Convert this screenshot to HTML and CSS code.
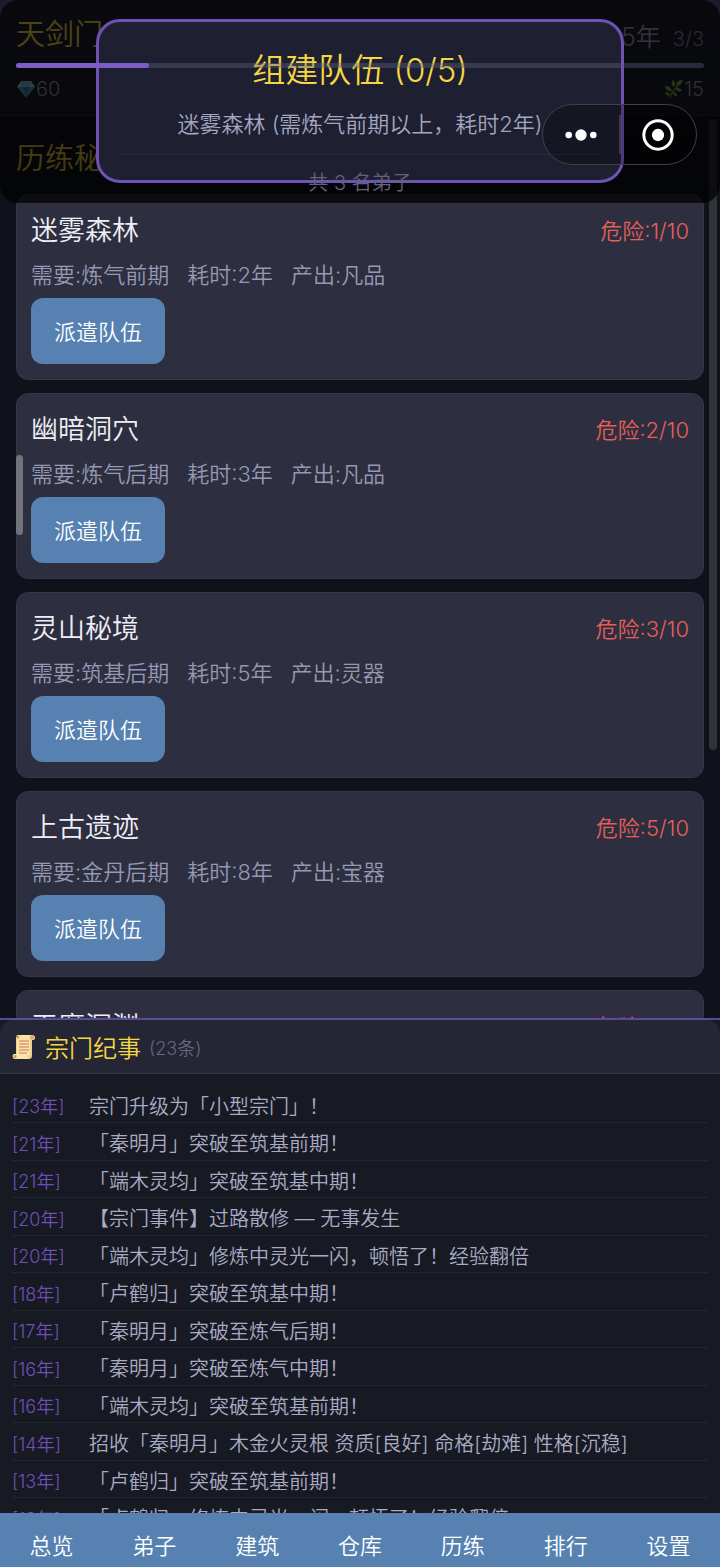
FILE: index.html
```html
<!DOCTYPE html>
<html lang="zh-CN">
<head>
<meta charset="utf-8">
<meta name="viewport" content="width=device-width, initial-scale=1">
<title>天剑门</title>
<link rel="stylesheet" href="styles.css">
</head>
<body>
<div class="app">
  <header class="topbar">
    <div class="topbar-row">
      <h1 class="sect-name">天剑门</h1>
      <div class="calendar"><span class="year">25年</span><span class="members">3/3</span></div>
    </div>
    <div class="progress"><div class="progress-fill" style="width:19.3%"></div></div>
    <div class="resources">
      <span class="resource">
        <svg class="res-icon" viewBox="0 0 20 20" aria-hidden="true"><path fill="#4f9fc4" d="M5 2h10l4 6-9 11L1 8z"/><path fill="#9bd8ee" d="M5 2l2 6H1zM15 2l4 6h-6z"/><path fill="#76c2df" d="M5 2h10l-2 6H7z"/><path fill="#3a86ad" d="M7 8h6l-3 11z"/></svg>60</span>
      <span class="resource">
        <svg class="res-icon" viewBox="0 0 20 20" aria-hidden="true"><path fill="none" stroke="#6f9a3c" stroke-width="1.3" d="M6 19C7 13 11 9 17 4"/><g fill="#7fae45"><path d="M19 1c-5 0-7 2-7 5 4 1 6-1 7-5z"/><path d="M10 8C7 7 7 3 9 1c2 2 3 4 1 7z"/><path d="M8 12C4 13 1 10 1 7c4 0 6 1 7 5z"/><path d="M11 9c3-1 6 0 7 3-4 1-6 0-7-3z"/><path d="M6 16c-2 1-5 0-5-3 3 0 5 1 5 3zM9 13c3 0 4 2 4 4-3 0-4-1-4-4z"/></g></svg>15</span>
    </div>
  </header>

  <main class="realms">
    <h2 class="realms-title">历练秘境</h2>
    <section class="card">
      <div class="card-head"><h3 class="card-title">迷雾森林</h3><span class="danger">危险:1/10</span></div>
      <p class="meta"><span>需要:炼气前期</span><span>耗时:2年</span><span>产出:凡品</span></p>
      <button class="send" type="button">派遣队伍</button>
    </section>
    <section class="card">
      <div class="card-head"><h3 class="card-title">幽暗洞穴</h3><span class="danger">危险:2/10</span></div>
      <p class="meta"><span>需要:炼气后期</span><span>耗时:3年</span><span>产出:凡品</span></p>
      <button class="send" type="button">派遣队伍</button>
    </section>
    <section class="card">
      <div class="card-head"><h3 class="card-title">灵山秘境</h3><span class="danger">危险:3/10</span></div>
      <p class="meta"><span>需要:筑基后期</span><span>耗时:5年</span><span>产出:灵器</span></p>
      <button class="send" type="button">派遣队伍</button>
    </section>
    <section class="card">
      <div class="card-head"><h3 class="card-title">上古遗迹</h3><span class="danger">危险:5/10</span></div>
      <p class="meta"><span>需要:金丹后期</span><span>耗时:8年</span><span>产出:宝器</span></p>
      <button class="send" type="button">派遣队伍</button>
    </section>
    <section class="card">
      <div class="card-head"><h3 class="card-title">天魔深渊</h3><span class="danger">危险:8/10</span></div>
    </section>
    <div class="scroll-thumb"></div>
    <div class="edge-handle"></div>
  </main>

  <section class="log">
    <header class="log-head">
      <svg class="scroll-icon" viewBox="0 0 24 26" aria-hidden="true"><path fill="#f3cf8c" d="M5 1h15c4 0 4 5 1 5h-1v15c0 3-1 4-3 4H4V4z"/><path fill="#fbe3ad" d="M5 1h13v20H5z"/><path fill="#e0ab62" d="M18 2c2-1 5 0 4 2-1 2-3 1-4 1z"/><path fill="#fbe3ad" d="M2 20h14c-1 2 0 5 2 5H3c-3 0-3-5-1-5z"/><circle cx="3" cy="22.500" r="1.500" fill="#d29a55"/><circle cx="6" cy="3" r="1.500" fill="#d29a55"/><path stroke="#c97a4a" stroke-width="1.200" d="M7 7h10M7 10h10M7 13h10M7 16h10M7 19h8"/></svg>
      <h2 class="log-title">宗门纪事</h2><span class="log-count">(23条)</span>
    </header>
    <ol class="log-list">
      <li class="entry"><time class="when">[23年]</time><span>宗门升级为「小型宗门」！</span></li>
      <li class="entry"><time class="when">[21年]</time><span>「秦明月」突破至筑基前期！</span></li>
      <li class="entry"><time class="when">[21年]</time><span>「端木灵均」突破至筑基中期！</span></li>
      <li class="entry"><time class="when">[20年]</time><span>【宗门事件】过路散修 — 无事发生</span></li>
      <li class="entry"><time class="when">[20年]</time><span>「端木灵均」修炼中灵光一闪，顿悟了！经验翻倍</span></li>
      <li class="entry"><time class="when">[18年]</time><span>「卢鹤归」突破至筑基中期！</span></li>
      <li class="entry"><time class="when">[17年]</time><span>「秦明月」突破至炼气后期！</span></li>
      <li class="entry"><time class="when">[16年]</time><span>「秦明月」突破至炼气中期！</span></li>
      <li class="entry"><time class="when">[16年]</time><span>「端木灵均」突破至筑基前期！</span></li>
      <li class="entry"><time class="when">[14年]</time><span>招收「秦明月」木金火灵根 资质[良好] 命格[劫难] 性格[沉稳]</span></li>
      <li class="entry"><time class="when">[13年]</time><span>「卢鹤归」突破至筑基前期！</span></li>
      <li class="entry"><time class="when">[13年]</time><span>「卢鹤归」修炼中灵光一闪，顿悟了！经验翻倍</span></li>
    </ol>
  </section>

  <nav class="tabs">
    <button class="tab" type="button">总览</button>
    <button class="tab" type="button">弟子</button>
    <button class="tab" type="button">建筑</button>
    <button class="tab" type="button">仓库</button>
    <button class="tab" type="button">历练</button>
    <button class="tab" type="button">排行</button>
    <button class="tab" type="button">设置</button>
  </nav>

  <div class="overlay">
    <div class="dialog" role="dialog" aria-labelledby="dialog-title">
      <h2 class="dialog-title" id="dialog-title">组建队伍 (0/5)</h2>
      <p class="dialog-sub">迷雾森林 (需炼气前期以上，耗时2年)</p>
      <p class="dialog-count">共 3 名弟子</p>
    </div>
  </div>

  <div class="capsule">
    <button class="capsule-btn" type="button" aria-label="更多"><svg class="capsule-icon" viewBox="0 0 36 36"><g fill="#fff"><circle cx="5" cy="18" r="3.500"/><circle cx="18" cy="18" r="6"/><circle cx="31" cy="18" r="3.500"/></g></svg></button>
    <button class="capsule-btn" type="button" aria-label="关闭"><svg class="capsule-icon" viewBox="0 0 36 36"><circle cx="18" cy="18" r="15" fill="none" stroke="#fff" stroke-width="3.200"/><circle cx="18" cy="18" r="6.500" fill="#fff"/></svg></button>
  </div>
</div>
</body>
</html>
```
FILE: styles.css
```css
* { box-sizing: border-box; }

body {
  margin: 0;
  background: #10121b;
  color: #eeeef6;
  font-family: Inter, "Noto Sans CJK SC", sans-serif;
  font-weight: 350;
}

h1, h2, h3, p, ol { margin: 0; padding: 0; font-weight: inherit; }

button {
  border: 0;
  background: none;
  color: inherit;
  font: inherit;
  padding: 0;
}

.app {
  position: relative;
  display: flex;
  flex-direction: column;
  height: 100vh;
  overflow: hidden;
}

/* Top bar */
.topbar {
  padding: 13px 16px 11px;
  background: #1b1d2c;
  border-bottom: 1px solid #2f3146;
}
.topbar-row { display: flex; justify-content: space-between; align-items: center; height: 44px; }
.sect-name { font-size: 29px; line-height: 44px; color: #f5d742; }
.calendar { display: flex; align-items: baseline; gap: 12px; color: #a0a0b4; }
.year { font-size: 25px; }
.members { font-size: 20px; color: #85859a; }
.progress {
  position: relative;
  z-index: 3;
  height: 5px;
  margin-top: 6px;
  border-radius: 3px;
  background: rgba(90, 94, 125, 0.4);
}
.progress-fill { height: 100%; border-radius: 3px; background: #7d5cc8; }
.resources {
  display: flex;
  justify-content: space-between;
  margin-top: 6px;
  line-height: 30px;
  font-size: 20px;
  color: #a0a0b4;
}
.resource { display: flex; align-items: center; }
.res-icon { width: 20px; height: 20px; }

/* Realm cards */
.realms {
  position: relative;
  flex: 34 1 0;
  min-height: 0;
  overflow: hidden;
  display: flex;
  flex-direction: column;
  gap: 13px;
  padding: 20px 16px 0;
}
.realms-title { font-size: 29px; line-height: 45px; color: #f5d742; }
.card {
  flex: none;
  padding: 14px 14px 15px;
  border: 1px solid #34364a;
  border-radius: 12px;
  background: #2d2f40;
}
.card-head { display: flex; justify-content: space-between; line-height: 44px; }
.card-title { font-size: 27px; }
.danger { font-size: 22px; color: #e55f58; }
.meta { display: flex; gap: 18px; font-size: 22px; line-height: 45px; color: #9698b4; }
.send {
  display: block;
  height: 66px;
  padding: 0 23px 2px;
  border-radius: 12px;
  background: #5681b1;
  color: #fff;
  font-size: 22px;
}
.scroll-thumb {
  position: absolute;
  top: 3px;
  right: 3px;
  width: 8px;
  height: 70%;
  border-radius: 4px;
  background: #303338;
}
.edge-handle {
  position: absolute;
  top: 339px;
  left: 16px;
  width: 7px;
  height: 80px;
  border-radius: 4px;
  background: #73747b;
}

/* Event log */
.log {
  flex: 19 1 0;
  min-height: 0;
  overflow: hidden;
  border-top: 2px solid #5f4a99;
  background: #171923;
}
.log-head {
  display: flex;
  align-items: center;
  height: 54px;
  padding: 0 12px;
  border-bottom: 1px solid #34354a;
  border-radius: 14px 14px 0 0;
  background: #252635;
}
.scroll-icon { width: 24px; height: 26px; margin-right: 9px; }
.log-title { font-size: 24px; color: #f5d742; }
.log-count { margin-left: 8px; font-size: 18px; color: #66687f; }
.log-list { list-style: none; padding: 12px 12px 0; }
.entry {
  display: flex;
  align-items: center;
  height: 37px;
  padding-top: 2px;
  border-bottom: 1px solid #232533;
  font-size: 20px;
  color: #a9abc3;
  white-space: nowrap;
}
.entry:nth-child(even) { height: 38px; }
.when { flex: 0 0 77px; font-size: 18px; color: #6f50b8; }

/* Bottom tabs */
.tabs { display: flex; background: #5681b1; }
.tab { flex: 1; padding: 18px 0 6px; font-size: 22px; line-height: 30px; color: #fff; }

/* Team dialog */
.overlay {
  position: absolute;
  top: 0;
  left: 0;
  right: 0;
  z-index: 2;
  padding: 19px 96px 20px;
  border-radius: 18px;
  background: linear-gradient(rgba(0, 0, 0, 0.68), rgba(0, 0, 0, 0.74));
}
.dialog {
  padding: 26px 21px 0;
  border: 3px solid #7052b4;
  border-radius: 24px;
  background: #1e2031;
  text-align: center;
}
.dialog-title { font-size: 33px; line-height: 44px; color: #f5d742; }
.dialog-sub {
  padding: 17px 0 15px;
  border-bottom: 1px solid #292b3b;
  font-size: 22px;
  line-height: 30px;
  color: #a4a6c2;
  white-space: nowrap;
}
.dialog-count {
  padding-top: 13px;
  margin-bottom: -18px;
  font-size: 20px;
  line-height: 30px;
  color: #63647a;
}

/* Host capsule */
.capsule {
  position: absolute;
  top: 104px;
  right: 23px;
  z-index: 4;
  display: flex;
  width: 155px;
  height: 61px;
  padding: 10px 0;
  border: 1px solid #414249;
  border-radius: 31px;
  background: rgba(0, 0, 0, 0.3);
}
.capsule-btn { flex: 1; display: flex; align-items: center; justify-content: center; }
.capsule-btn + .capsule-btn { border-left: 2px solid #3a3b44; }
.capsule-icon { width: 34px; height: 34px; }
```
